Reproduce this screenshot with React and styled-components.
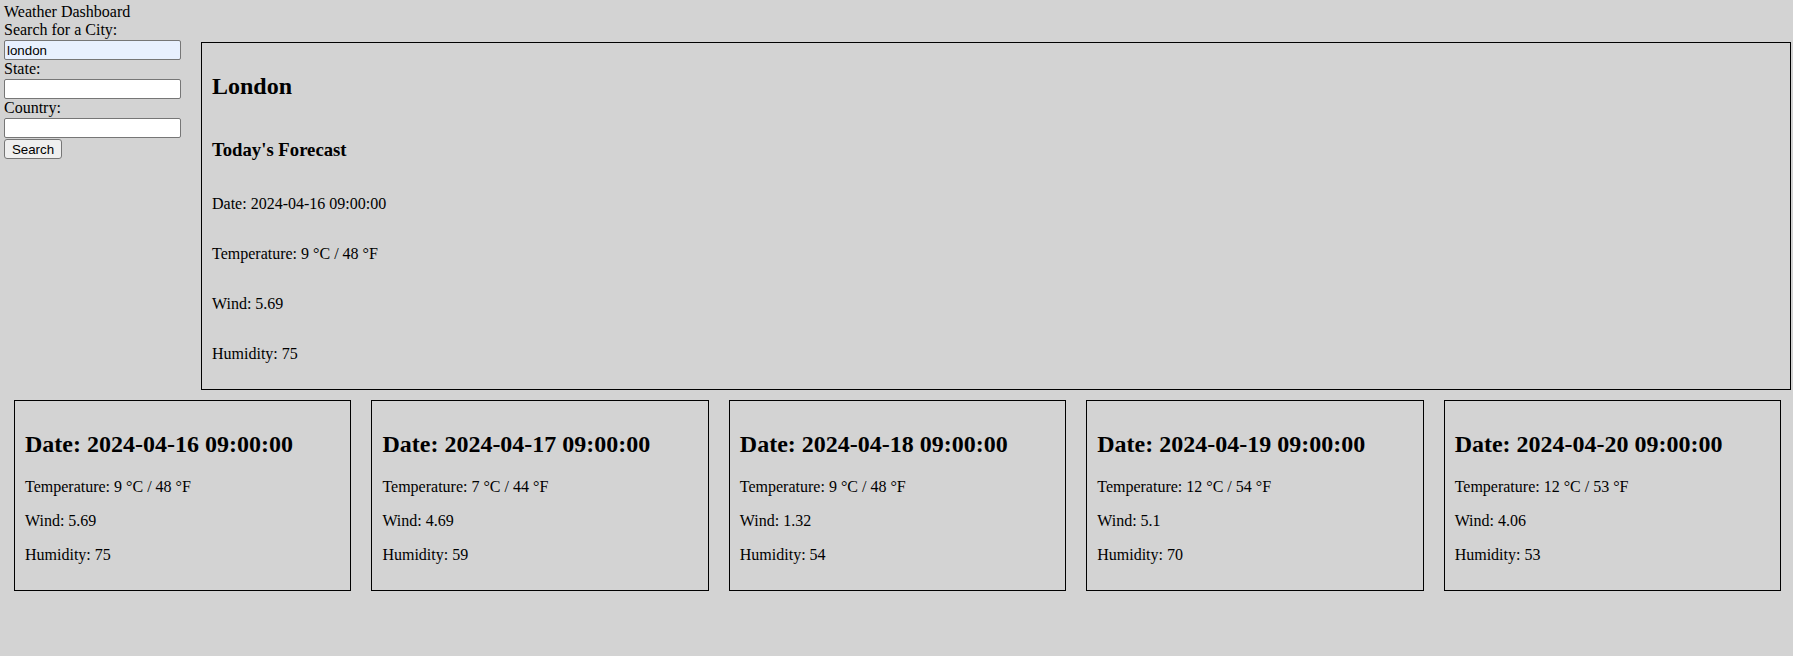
import React from "react";
import styled, { createGlobalStyle } from "styled-components";

const GlobalStyle = createGlobalStyle`
  html, body {
    background: #d3d3d3;
    margin: 0;
    min-height: 100%;
  }
  body {
    font-family: "Liberation Serif", "Times New Roman", serif;
    font-size: 16px;
    color: #000;
  }
`;

const Page = styled.div`
  padding: 3px 2px 0 4px;
`;

const TopRow = styled.div`
  display: flex;
  align-items: flex-start;
`;

const Sidebar = styled.form`
  width: 177px;
  display: flex;
  flex-direction: column;
  align-items: flex-start;
`;

const Title = styled.div`
  line-height: 18px;
`;

const Label = styled.label`
  display: block;
  line-height: 18px;
`;

const TextInput = styled.input`
  box-sizing: border-box;
  width: 177px;
  height: 20px;
  margin: 1px 0 0;
  padding: 1px 2px;
  border: 1px solid #767676;
  border-radius: 2px;
  background: ${(p) => (p.$filled ? "#e8f0fe" : "#ffffff")};
  font-family: "Liberation Sans", Arial, sans-serif;
  font-size: 13.333px;
  color: #000;
  outline: none;
`;

const SearchButton = styled.button`
  box-sizing: border-box;
  width: 58px;
  height: 20px;
  margin: 1px 0 0;
  padding: 1px 6px;
  border: 1px solid #767676;
  border-radius: 3px;
  background: #efefef;
  font-family: "Liberation Sans", Arial, sans-serif;
  font-size: 13.333px;
  color: #000;
`;

const CurrentPanel = styled.section`
  flex: 1;
  margin: 39px 0 0 20px;
  border: 1px solid #000;
  padding: 10px;
  display: flex;
  flex-direction: column;
`;

const CityName = styled.h2`
  font-size: 24px;
  margin: 0.83em 0;
`;

const SubTitle = styled.h3`
  font-size: 18.72px;
  margin: 1em 0;
`;

const Detail = styled.p`
  margin: 16px 0;
`;

const CardsRow = styled.div`
  display: flex;
`;

const Card = styled.div`
  flex: 1;
  min-width: 0;
  margin: 10px;
  border: 1px solid #000;
  padding: 10px;
`;

const CardDate = styled.h2`
  font-size: 24px;
  margin: 0.83em 0;
  white-space: nowrap;
`;

const forecast = [
  { date: "2024-04-16 09:00:00", c: 9, f: 48, wind: "5.69", hum: 75 },
  { date: "2024-04-17 09:00:00", c: 7, f: 44, wind: "4.69", hum: 59 },
  { date: "2024-04-18 09:00:00", c: 9, f: 48, wind: "1.32", hum: 54 },
  { date: "2024-04-19 09:00:00", c: 12, f: 54, wind: "5.1", hum: 70 },
  { date: "2024-04-20 09:00:00", c: 12, f: 53, wind: "4.06", hum: 53 },
];

export default function App() {
  return (
    <Page>
      <GlobalStyle />
      <TopRow>
        <Sidebar onSubmit={(e) => e.preventDefault()}>
          <Title>Weather Dashboard</Title>
          <Label htmlFor="city">Search for a City:</Label>
          <TextInput id="city" $filled defaultValue="london" />
          <Label htmlFor="state">State:</Label>
          <TextInput id="state" />
          <Label htmlFor="country">Country:</Label>
          <TextInput id="country" />
          <SearchButton type="submit">Search</SearchButton>
        </Sidebar>
        <CurrentPanel>
          <CityName>London</CityName>
          <SubTitle>Today's Forecast</SubTitle>
          <Detail>Date: 2024-04-16 09:00:00</Detail>
          <Detail>Temperature: 9 °C / 48 °F</Detail>
          <Detail>Wind: 5.69</Detail>
          <Detail>Humidity: 75</Detail>
        </CurrentPanel>
      </TopRow>
      <CardsRow>
        {forecast.map((d) => (
          <Card key={d.date}>
            <CardDate>Date: {d.date}</CardDate>
            <Detail>
              Temperature: {d.c} °C / {d.f} °F
            </Detail>
            <Detail>Wind: {d.wind}</Detail>
            <Detail>Humidity: {d.hum}</Detail>
          </Card>
        ))}
      </CardsRow>
    </Page>
  );
}
